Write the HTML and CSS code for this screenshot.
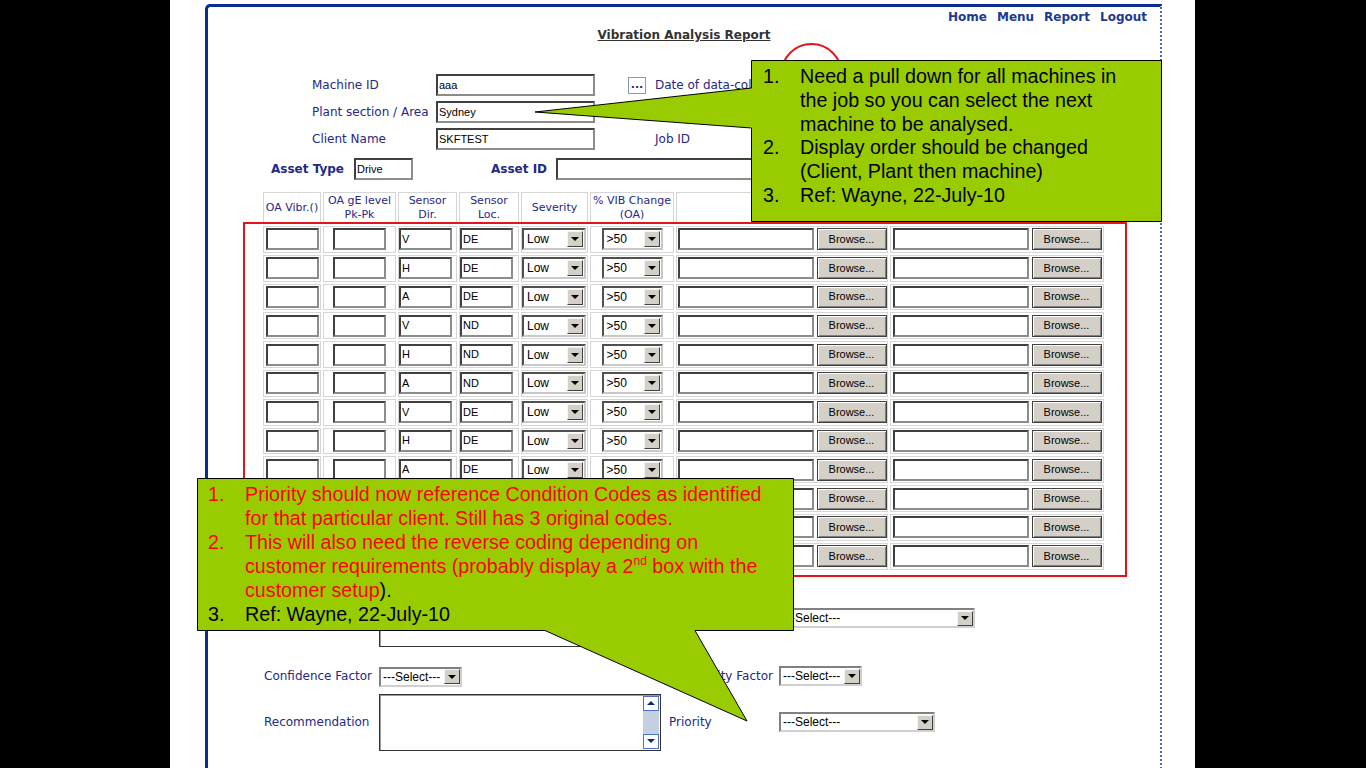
FILE: index.html
```html
<!DOCTYPE html>
<html>
<head>
<meta charset="utf-8">
<title>Vibration Analysis Report</title>
<link rel="stylesheet" href="styles.css">
</head>
<body>
<div class="slide">
  <div class="page">
    <div class="nav"><a>Home</a><a>Menu</a><a>Report</a><a>Logout</a></div>
    <div class="title"><span>Vibration Analysis Report</span></div>

    <div class="info">
      <span class="lbl">Machine ID</span><span class="txt">aaa</span><span></span><span class="dots">...</span><span class="lbl">Date of data-collection</span>
      <span class="lbl">Plant section / Area</span><span class="txt">Sydney</span><span></span><span></span><span></span>
      <span class="lbl">Client Name</span><span class="txt">SKFTEST</span><span></span><span></span><span class="lbl">Job ID</span>
    </div>

    <div class="asset">
      <span class="blbl b1">Asset Type</span><span class="txt t1">Drive</span>
      <span class="blbl b2">Asset ID</span><span class="txt t2"></span>
    </div>

    <table class="grid">
      <colgroup><col class="c1"><col class="c2"><col class="c3"><col class="c4"><col class="c5"><col class="c6"><col class="c7"><col class="c8"></colgroup>
      <thead>
        <tr><th>OA Vibr.()</th><th>OA gE level<br>Pk-Pk</th><th>Sensor<br>Dir.</th><th>Sensor<br>Loc.</th><th>Severity</th><th>% VIB Change<br>(OA)</th><th>Image 1</th><th>Image 2</th></tr>
      </thead>
      <tbody>
        <tr><td><span class="ti"></span></td><td><span class="ti"></span></td><td class="l1"><span class="ti">V</span></td><td class="l1"><span class="ti">DE</span></td><td class="l0"><span class="sel s1"><span class="v">Low</span><span class="a"></span></span></td><td><span class="sel s2"><span class="v">&gt;50</span><span class="a"></span></span></td><td><span class="file"><span class="ft"></span><span class="br">Browse...</span></span></td><td><span class="file"><span class="ft"></span><span class="br">Browse...</span></span></td></tr>
        <tr><td><span class="ti"></span></td><td><span class="ti"></span></td><td class="l1"><span class="ti">H</span></td><td class="l1"><span class="ti">DE</span></td><td class="l0"><span class="sel s1"><span class="v">Low</span><span class="a"></span></span></td><td><span class="sel s2"><span class="v">&gt;50</span><span class="a"></span></span></td><td><span class="file"><span class="ft"></span><span class="br">Browse...</span></span></td><td><span class="file"><span class="ft"></span><span class="br">Browse...</span></span></td></tr>
        <tr><td><span class="ti"></span></td><td><span class="ti"></span></td><td class="l1"><span class="ti">A</span></td><td class="l1"><span class="ti">DE</span></td><td class="l0"><span class="sel s1"><span class="v">Low</span><span class="a"></span></span></td><td><span class="sel s2"><span class="v">&gt;50</span><span class="a"></span></span></td><td><span class="file"><span class="ft"></span><span class="br">Browse...</span></span></td><td><span class="file"><span class="ft"></span><span class="br">Browse...</span></span></td></tr>
        <tr><td><span class="ti"></span></td><td><span class="ti"></span></td><td class="l1"><span class="ti">V</span></td><td class="l1"><span class="ti">ND</span></td><td class="l0"><span class="sel s1"><span class="v">Low</span><span class="a"></span></span></td><td><span class="sel s2"><span class="v">&gt;50</span><span class="a"></span></span></td><td><span class="file"><span class="ft"></span><span class="br">Browse...</span></span></td><td><span class="file"><span class="ft"></span><span class="br">Browse...</span></span></td></tr>
        <tr><td><span class="ti"></span></td><td><span class="ti"></span></td><td class="l1"><span class="ti">H</span></td><td class="l1"><span class="ti">ND</span></td><td class="l0"><span class="sel s1"><span class="v">Low</span><span class="a"></span></span></td><td><span class="sel s2"><span class="v">&gt;50</span><span class="a"></span></span></td><td><span class="file"><span class="ft"></span><span class="br">Browse...</span></span></td><td><span class="file"><span class="ft"></span><span class="br">Browse...</span></span></td></tr>
        <tr><td><span class="ti"></span></td><td><span class="ti"></span></td><td class="l1"><span class="ti">A</span></td><td class="l1"><span class="ti">ND</span></td><td class="l0"><span class="sel s1"><span class="v">Low</span><span class="a"></span></span></td><td><span class="sel s2"><span class="v">&gt;50</span><span class="a"></span></span></td><td><span class="file"><span class="ft"></span><span class="br">Browse...</span></span></td><td><span class="file"><span class="ft"></span><span class="br">Browse...</span></span></td></tr>
        <tr><td><span class="ti"></span></td><td><span class="ti"></span></td><td class="l1"><span class="ti">V</span></td><td class="l1"><span class="ti">DE</span></td><td class="l0"><span class="sel s1"><span class="v">Low</span><span class="a"></span></span></td><td><span class="sel s2"><span class="v">&gt;50</span><span class="a"></span></span></td><td><span class="file"><span class="ft"></span><span class="br">Browse...</span></span></td><td><span class="file"><span class="ft"></span><span class="br">Browse...</span></span></td></tr>
        <tr><td><span class="ti"></span></td><td><span class="ti"></span></td><td class="l1"><span class="ti">H</span></td><td class="l1"><span class="ti">DE</span></td><td class="l0"><span class="sel s1"><span class="v">Low</span><span class="a"></span></span></td><td><span class="sel s2"><span class="v">&gt;50</span><span class="a"></span></span></td><td><span class="file"><span class="ft"></span><span class="br">Browse...</span></span></td><td><span class="file"><span class="ft"></span><span class="br">Browse...</span></span></td></tr>
        <tr><td><span class="ti"></span></td><td><span class="ti"></span></td><td class="l1"><span class="ti">A</span></td><td class="l1"><span class="ti">DE</span></td><td class="l0"><span class="sel s1"><span class="v">Low</span><span class="a"></span></span></td><td><span class="sel s2"><span class="v">&gt;50</span><span class="a"></span></span></td><td><span class="file"><span class="ft"></span><span class="br">Browse...</span></span></td><td><span class="file"><span class="ft"></span><span class="br">Browse...</span></span></td></tr>
        <tr><td><span class="ti"></span></td><td><span class="ti"></span></td><td class="l1"><span class="ti">V</span></td><td class="l1"><span class="ti">ND</span></td><td class="l0"><span class="sel s1"><span class="v">Low</span><span class="a"></span></span></td><td><span class="sel s2"><span class="v">&gt;50</span><span class="a"></span></span></td><td><span class="file"><span class="ft"></span><span class="br">Browse...</span></span></td><td><span class="file"><span class="ft"></span><span class="br">Browse...</span></span></td></tr>
        <tr><td><span class="ti"></span></td><td><span class="ti"></span></td><td class="l1"><span class="ti">H</span></td><td class="l1"><span class="ti">ND</span></td><td class="l0"><span class="sel s1"><span class="v">Low</span><span class="a"></span></span></td><td><span class="sel s2"><span class="v">&gt;50</span><span class="a"></span></span></td><td><span class="file"><span class="ft"></span><span class="br">Browse...</span></span></td><td><span class="file"><span class="ft"></span><span class="br">Browse...</span></span></td></tr>
        <tr><td><span class="ti"></span></td><td><span class="ti"></span></td><td class="l1"><span class="ti">A</span></td><td class="l1"><span class="ti">ND</span></td><td class="l0"><span class="sel s1"><span class="v">Low</span><span class="a"></span></span></td><td><span class="sel s2"><span class="v">&gt;50</span><span class="a"></span></span></td><td><span class="file"><span class="ft"></span><span class="br">Browse...</span></span></td><td><span class="file"><span class="ft"></span><span class="br">Browse...</span></span></td></tr>
      </tbody>
    </table>

    <div class="lrow ra">
      <span class="lbl">Diagnosis</span>
      <span class="area"></span>
      <span class="lbl">Fault Type</span>
      <span class="lsel w196"><span class="v">---Select---</span><span class="a"></span></span>
    </div>
    <div class="lrow rb">
      <span class="lbl">Confidence Factor</span>
      <span><span class="lsel w83"><span class="v">---Select---</span><span class="a"></span></span></span>
      <span class="lbl">Probability Factor</span>
      <span class="lsel w83"><span class="v">---Select---</span><span class="a"></span></span>
    </div>
    <div class="lrow rc">
      <span class="lbl">Recommendation</span>
      <span class="area"><span class="sb"><span class="up"></span><span class="dn"></span></span></span>
      <span class="lbl">Priority</span>
      <span class="lsel w156"><span class="v">---Select---</span><span class="a"></span></span>
    </div>
  </div>
</div>

<svg class="overlay" width="1366" height="768" viewBox="0 0 1366 768">
  <rect x="244" y="223" width="882" height="353" fill="none" stroke="#e3141b" stroke-width="2"/>
  <circle cx="811.5" cy="74" r="30" fill="none" stroke="#e3141b" stroke-width="2"/>
  <polygon points="751.5,60.5 1161.5,60.5 1161.5,221.5 751.5,221.5 751.5,128 535,112 751.5,88" fill="#99cc00" stroke="#000" stroke-width="1"/>
  <polygon points="197.5,478.5 793.5,478.5 793.5,630.5 695,630.5 747,721 545,630.5 197.5,630.5" fill="#99cc00" stroke="#000" stroke-width="1"/>
</svg>

<div class="note note-top">
  <div class="it"><span class="n">1.</span><span>Need a pull down for all machines in<br>the job so you can select the next<br>machine to be analysed.</span></div>
  <div class="it"><span class="n">2.</span><span>Display order should be changed<br>(Client, Plant then machine)</span></div>
  <div class="it"><span class="n">3.</span><span>Ref: Wayne, 22-July-10</span></div>
</div>

<div class="note note-bottom">
  <div class="it"><span class="n">1.</span><span>Priority should now reference Condition Codes as identified<br>for that particular client. Still has 3 original codes.</span></div>
  <div class="it"><span class="n">2.</span><span>This will also need the reverse coding depending on<br>customer requirements (probably display a 2<sup>nd</sup> box with the<br>customer setup<span class="blk">).</span></span></div>
  <div class="it blk"><span class="n">3.</span><span>Ref: Wayne, 22-July-10</span></div>
</div>
</body>
</html>
```
FILE: styles.css
```css
* { box-sizing: border-box; }
html, body { margin: 0; padding: 0; }
body {
  background: #000;
  width: 1366px;
  height: 768px;
  overflow: hidden;
  position: relative;
  font-family: "DejaVu Sans", Verdana, sans-serif;
}
.slide {
  margin-left: 170px;
  width: 1025px;
  height: 768px;
  background: #fff;
  padding: 4px 0 0 35px;
  overflow: hidden;
}
.page {
  width: 957px;
  height: 820px;
  border-top: 3px solid #0b2d8e;
  border-left: 3px solid #0b2d8e;
  border-right: 2px dotted #4a6cc4;
  border-top-left-radius: 5px;
  background: #fff;
}
.nav {
  display: flex;
  justify-content: flex-end;
  gap: 10px;
  padding-right: 13px;
  margin-top: 3px;
  font-size: 12px;
  line-height: 14px;
  font-weight: bold;
}
.nav a { color: #1c3a94; text-decoration: none; }
.title {
  margin-top: 4px;
  text-align: center;
  font-size: 12px;
  line-height: 14px;
  font-weight: bold;
  color: #333;
}
.title span { text-decoration: underline; }

.lbl { font-size: 12px; color: #272785; white-space: nowrap; }
.blbl { font-size: 12px; font-weight: bold; color: #1e2a86; white-space: nowrap; }

.txt {
  display: flex;
  align-items: center;
  height: 22px;
  border: 2px solid;
  border-color: #404040 #8c8c8c #8c8c8c #404040;
  background: #fff;
  color: #000;
  font: 11px "Liberation Sans", Arial, sans-serif;
  padding: 0 1px;
}

.info {
  margin: 32px 0 0 104px;
  display: grid;
  grid-template-columns: 124px 159px 33px 27px auto;
  grid-auto-rows: 22px;
  row-gap: 5px;
  align-items: center;
}
.dots {
  width: 18px;
  height: 17px;
  border: 1px solid #7f9db9;
  background: #fff;
  color: #1c2a80;
  font-size: 11px;
  font-weight: bold;
  display: flex;
  align-items: flex-end;
  justify-content: center;
  line-height: 12px;
  padding-bottom: 2px;
}

.asset {
  margin: 8px 0 0 63px;
  display: flex;
  align-items: center;
  height: 22px;
}
.asset .b1 { width: 83px; }
.asset .t1 { width: 59px; }
.asset .b2 { margin-left: 78px; width: 65px; }
.asset .t2 { width: 320px; }

.grid {
  margin: 10px 0 0 53px;
  border-collapse: separate;
  border-spacing: 2px;
  table-layout: fixed;
  width: 845px;
}
.c1 { width: 58px; } .c2 { width: 73px; } .c3 { width: 59px; } .c4 { width: 60px; }
.c5 { width: 67px; } .c6 { width: 84px; } .c7 { width: 212px; } .c8 { width: 214px; }
.grid th, .grid td {
  border: 1px solid #d6d6d6;
  padding: 0;
  text-align: center;
  vertical-align: middle;
}
.grid th {
  height: 32px;
  font-size: 11px;
  font-weight: normal;
  line-height: 14px;
  color: #272785;
}
.grid td { height: 26.8px; font-size: 0; line-height: 0; }
.grid td.l1 { text-align: left; padding-left: 0; }
.grid td.l0 { text-align: left; padding-left: 0; }

.ti {
  display: inline-flex;
  align-items: center;
  vertical-align: middle;
  width: 53px;
  height: 22px;
  border: 2px solid;
  border-color: #404040 #8c8c8c #8c8c8c #404040;
  background: #fff;
  padding-left: 1px;
  font: 11px/13px "Liberation Sans", Arial, sans-serif;
  color: #000;
}
.sel {
  display: inline-flex;
  align-items: center;
  vertical-align: middle;
  height: 22px;
  border: 2px solid;
  border-color: #505050 #c8c8c8 #c8c8c8 #505050;
  background: #fff;
  font: 12px/14px "Liberation Sans", Arial, sans-serif;
  color: #000;
  text-align: left;
}
.sel.s1 { width: 64px; }
.sel.s2 { width: 61px; }
.sel .v { flex: 1; padding-left: 3px; }
.sel .a, .lsel .a {
  width: 16px;
  height: 16px;
  margin-right: 1px;
  background: #d4d0c8;
  border: 1px solid;
  border-color: #f4f4f4 #404040 #404040 #f4f4f4;
  display: flex;
  align-items: center;
  justify-content: center;
}
.sel .a::after, .lsel .a::after {
  content: "";
  border-left: 4px solid transparent;
  border-right: 4px solid transparent;
  border-top: 4px solid #000;
}
.file {
  display: inline-flex;
  align-items: center;
  vertical-align: middle;
  gap: 3px;
}
.ft {
  width: 136px;
  height: 22px;
  border: 2px solid;
  border-color: #404040 #8c8c8c #8c8c8c #404040;
  background: #fff;
}
.br {
  display: inline-flex;
  align-items: center;
  justify-content: center;
  width: 70px;
  height: 22px;
  background: #d4d0c8;
  border: 1px solid #404040;
  box-shadow: inset 1px 1px #ffffff, inset -1px -1px #808080;
  font: 11px/13px "Liberation Sans", Arial, sans-serif;
  color: #000;
}

.lrow {
  display: grid;
  grid-template-columns: 115px 290px 110px auto;
  align-items: center;
  margin-left: 56px;
}
.lrow.ra { margin-top: 18px; height: 57px; }
.lrow.rb { margin-top: 19px; height: 20px; }
.lrow.rc { margin-top: 8px; height: 57px; }
.area {
  width: 282px;
  height: 57px;
  border: 1px solid #333;
  box-shadow: inset 1px 1px #9a9a9a;
  background: #fff;
  display: flex;
  justify-content: flex-end;
}
.sb {
  width: 16px;
  margin: 1px 1px 1px 0;
  background: #c5cfe2;
  display: flex;
  flex-direction: column;
  justify-content: space-between;
}
.sb span {
  height: 15px;
  background: #fff;
  border: 1px solid #4a72c8;
  display: flex;
  align-items: center;
  justify-content: center;
}
.sb .up::after {
  content: "";
  border-left: 4px solid transparent;
  border-right: 4px solid transparent;
  border-bottom: 4px solid #0a2a7a;
}
.sb .dn::after {
  content: "";
  border-left: 4px solid transparent;
  border-right: 4px solid transparent;
  border-top: 4px solid #0a2a7a;
}
.lsel {
  display: inline-flex;
  align-items: center;
  height: 20px;
  border: 2px solid;
  border-color: #808080 #d0d0d0 #d0d0d0 #808080;
  background: #fff;
  font: 12px/14px "Liberation Sans", Arial, sans-serif;
  color: #000;
}
.lsel .v { flex: 1; padding-left: 2px; white-space: nowrap; }
.lsel .a { height: 15px; margin-right: 0; }
.w196 { width: 196px; }
.w83 { width: 83px; }
.w156 { width: 156px; }

.overlay { position: absolute; left: 0; top: 0; }
.note {
  position: absolute;
  font-family: "Liberation Sans", Arial, sans-serif;
  font-size: 19.7px;
  white-space: nowrap;
}
.note-top {
  left: 751px;
  top: 60px;
  padding: 5px 0 0 12px;
  line-height: 23.8px;
  color: #000;
}
.note-bottom {
  left: 197px;
  top: 478px;
  padding: 4px 0 0 11px;
  line-height: 24px;
  color: #ff0000;
}
.it { display: flex; }
.it .n { width: 37px; flex: none; }
.blk { color: #000; }
sup { font-size: 12px; line-height: 0; vertical-align: 8px; }
```
